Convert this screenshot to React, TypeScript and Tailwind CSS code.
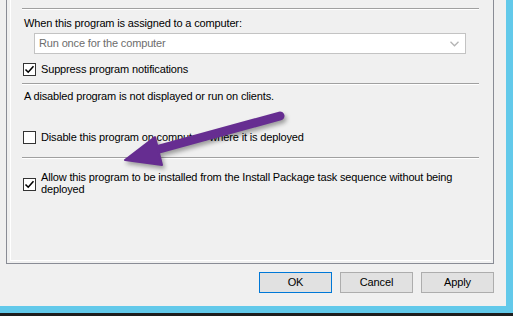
import React from "react";

// Windows 10 style property page (Program properties, Advanced tab)

function Separator({ className = "" }: { className?: string }) {
  return <div className={`h-0 border-t border-b border-t-[#a0a0a0] border-b-white ${className}`} />;
}

function CheckBox({ checked, className = "" }: { checked: boolean; className?: string }) {
  return (
    <div className={`h-[13px] w-[13px] shrink-0 border border-[#333333] bg-white ${className}`}>
      {checked && (
        <svg viewBox="0 0 11 11" className="h-[11px] w-[11px]">
          <path d="M1.5 5.5 L4.2 8.2 L9.5 2.2" fill="none" stroke="#000" strokeWidth="1.6" />
        </svg>
      )}
    </div>
  );
}

function DialogButton({ label, primary = false }: { label: string; primary?: boolean }) {
  return (
    <button
      className={`flex h-[21px] w-[73px] items-center justify-center border bg-[#e1e1e1] text-black ${
        primary ? "border-[#0078d7]" : "border-[#adadad]"
      }`}
    >
      {label}
    </button>
  );
}

export default function App() {
  return (
    <div
      className="relative flex h-[316px] w-[513px] flex-col overflow-hidden bg-[#62c9ea] text-[11px] tracking-[-0.15px] text-black"
      style={{ fontFamily: '"Liberation Sans", Arial, sans-serif' }}
    >
      <div className="flex h-[313px] flex-col">
        {/* dialog window body */}
        <div className="flex h-[306px] w-[506px] flex-col bg-[#f0f0f0]">
          {/* tab page */}
          <div className="ml-[6px] h-[264px] w-[488px] border-x border-b border-[#898c95] pb-[2px] pl-[3px] pr-[2px]">
            <div className="flex h-full flex-col border-b border-l border-white">
              <div className="ml-[11px] mr-[12px] flex flex-col">
                <Separator className="mt-[8px]" />

                <div className="ml-[2px] mt-[6px] h-[15px] leading-[15px]">
                  When this program is assigned to a computer:
                </div>

                <div className="ml-[12px] mr-[13px] mt-[2px] flex h-[21px] items-center justify-between border border-[#c3c3c3] bg-white pl-[4px] pr-[6px]">
                  <span className="leading-[15px] text-[#6d6d6d]">Run once for the computer</span>
                  <svg viewBox="0 0 9 6" className="h-[6px] w-[9px]">
                    <path d="M0.5 0.8 L4.5 4.8 L8.5 0.8" fill="none" stroke="#b4b4b4" strokeWidth="1.3" />
                  </svg>
                </div>

                <div className="ml-[1px] mt-[9px] flex items-center gap-[5px]">
                  <CheckBox checked />
                  <span className="leading-[13px]">Suppress program notifications</span>
                </div>

                <Separator className="mt-[7px]" />

                <div className="ml-[2px] mt-[4px] h-[15px] leading-[15px]">
                  A disabled program is not displayed or run on clients.
                </div>

                <div className="ml-[1px] mt-[27px] flex items-center gap-[5px]">
                  <CheckBox checked={false} />
                  <span className="leading-[13px]">Disable this program on computers where it is deployed</span>
                </div>

                <Separator className="mt-[13px]" />

                <div className="ml-[1px] mt-[12px] flex items-start gap-[5px]">
                  <CheckBox checked className="mt-[7px]" />
                  <span className="whitespace-nowrap leading-[12px]">
                    Allow this program to be installed from the Install Package task sequence without being
                    <br />
                    deployed
                  </span>
                </div>
              </div>
            </div>
          </div>

          {/* dialog buttons */}
          <div className="mr-[12px] mt-[8px] flex justify-end gap-[8px]">
            <DialogButton label="OK" primary />
            <DialogButton label="Cancel" />
            <DialogButton label="Apply" />
          </div>
        </div>
      </div>
      <div className="h-[3px] bg-[#1e1e1e]" />

      {/* purple annotation arrow */}
      <svg
        className="pointer-events-none absolute left-0 top-0"
        width="513"
        height="316"
        viewBox="0 0 513 316"
        style={{ filter: "drop-shadow(2px 3px 2px rgba(0,0,0,0.35))" }}
      >
        <line x1="280" y1="116" x2="152" y2="151" stroke="#662d91" strokeWidth="9" strokeLinecap="round" />
        <polygon points="125,160 155,137 162,165" fill="#662d91" strokeLinejoin="round" stroke="#662d91" strokeWidth="2" />
      </svg>
    </div>
  );
}
